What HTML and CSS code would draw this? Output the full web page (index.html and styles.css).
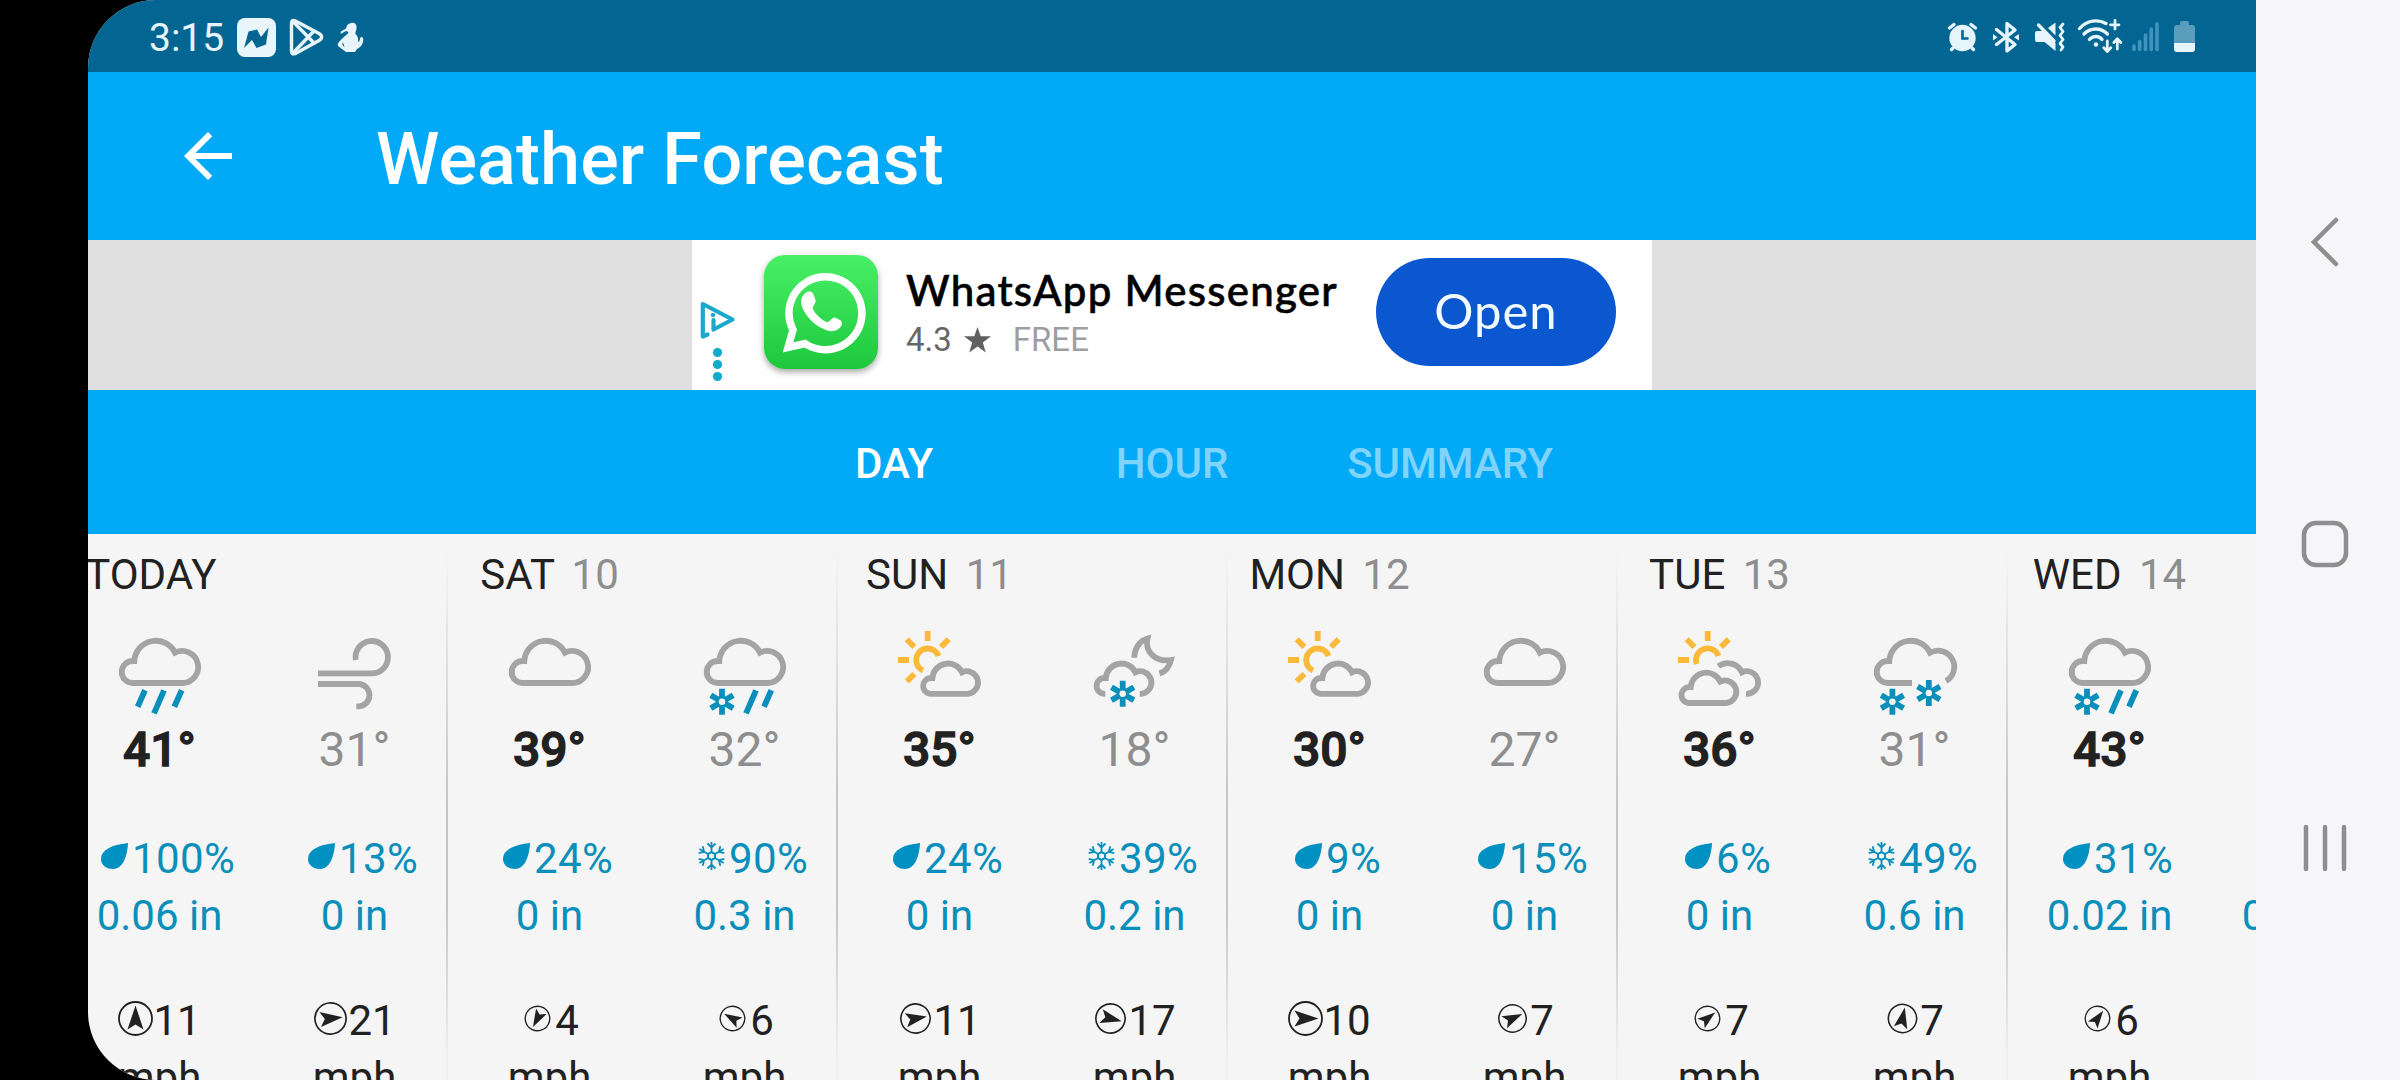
FILE: index.html
```html
<!doctype html>
<html lang="en">
<head>
	<meta charset="UTF-8" />
	<title>Weather Forecast</title>
	<link rel="stylesheet" href="styles.css">
</head>
<body>
	<!-- weather icons -->
	<svg class="defs">
		<symbol id="flake" viewBox="-14 -14 28 28">
			<path class="blue" d="M0 -13V-3.6M0 13V3.6M-11.2 -6.5L-3.1 -1.8M11.2 6.5L3.1 1.8M-11.2 6.5L-3.1 1.8M11.2 -6.5L3.1 -1.8"/>
			<circle class="ring" r="4.6"/>
		</symbol>
		<symbol id="cloud" viewBox="0 0 96 96">
			<path class="gray" d="M22.3 37A21.5 21.5 0 0 1 63 28.7A16 16 0 1 1 71 59H20.7A11 11 0 0 1 20.7 37Z"/>
		</symbol>
		<symbol id="small-cloud" viewBox="0 0 96 96">
			<path class="gray" d="M40.4 54A15.6 15.6 0 0 1 70 48.3A11.3 11.3 0 1 1 75.9 69.8H39.1A7.9 7.9 0 0 1 39.1 54Z"/>
		</symbol>
		<symbol id="rain" viewBox="0 0 96 96">
			<use href="#cloud" width="96" height="96"/>
			<path class="blue" d="M33 66.3L25.7 82.7M52 66.3L42 89.3M69.7 66.3L62.3 82.7"/>
		</symbol>
		<symbol id="sleet" viewBox="0 0 96 96">
			<use href="#cloud" width="96" height="96"/>
			<use href="#flake" x="11" y="63.7" width="28" height="28"/>
			<path class="blue" d="M59 66.3L49 89.3M74.3 66.3L67 82.7"/>
		</symbol>
		<symbol id="wind" viewBox="0 0 96 96">
			<path class="gray" d="M11 49.4H65A16.2 16.2 0 1 0 48.8 36M11 60H52.3A11.2 11.2 0 0 1 52.3 82.3H49.3"/>
		</symbol>
		<symbol id="sun-cloud" viewBox="0 0 96 96">
			<path class="sun" d="M46.5 32A11.5 11.5 0 1 0 31 46.5M35.7 7V17M56.7 15.3L49 23M14.7 15.3L22.4 23M6 36H17M14.7 57.3L22.4 50"/>
			<use href="#small-cloud" width="96" height="96"/>
		</symbol>
		<symbol id="sun-clouds" viewBox="0 0 96 96">
			<path class="sun" d="M46.5 32A11.5 11.5 0 0 0 24.7 40M35.7 7V17M56.7 15.3L49 23M14.7 15.3L22.4 23M6 36H17"/>
			<path class="gray" d="M46.3 42.3A15.6 15.6 0 0 1 70 48.3A11.3 11.3 0 1 1 74 69.8"/>
			<use href="#small-cloud" x="-21.7" y="9.2" width="96" height="96"/>
		</symbol>
		<symbol id="night-snow" viewBox="0 0 96 96">
			<path class="gray" d="M18.3 69.8H17.5A7.9 7.9 0 0 1 17.5 54H18.8A15.6 15.6 0 0 1 48.4 48.3A11.3 11.3 0 1 1 54.3 69.8H52.7"/>
			<path class="gray" d="M47.3 33.7C47.5 24 53 16.5 60.5 14.5C57.5 27 68 38.5 84 36C82 44 78 48 72.5 49.6"/>
			<use href="#flake" x="21.7" y="55.7" width="28" height="28"/>
		</symbol>
		<symbol id="snow" viewBox="0 0 96 96">
			<path class="gray" d="M45 59H20.7A11 11 0 0 1 20.7 37H22.3A21.5 21.5 0 0 1 63 28.7A16 16 0 0 1 79 57"/>
			<use href="#flake" x="11.4" y="63.7" width="28" height="28"/>
			<use href="#flake" x="47.8" y="55" width="28" height="28"/>
		</symbol>
		<symbol id="drop" viewBox="0 0 43 28">
			<path fill="#0090c2" d="M40 1C39.6 11 36 27 25 27C17.500 27 13 22.500 13 17C13 8 23 3 40 1Z"/>
		</symbol>
		<symbol id="crystal" viewBox="0 0 43 28">
			<g class="crystal" transform="translate(26.500 14)">
				<path id="arm" d="M0 -4V-14M-4 -12.500L0 -8.500L4 -12.500M-3.500 -2L0 -4L3.500 -2"/>
				<use href="#arm" transform="rotate(60)"/>
				<use href="#arm" transform="rotate(120)"/>
				<use href="#arm" transform="rotate(180)"/>
				<use href="#arm" transform="rotate(240)"/>
				<use href="#arm" transform="rotate(300)"/>
			</g>
		</symbol>
	</svg>

	<main class="app">
		<div class="status">
			<span class="time">3:15</span>
			<svg class="notify" width="39" height="39" viewBox="0 0 39 39">
				<rect width="39" height="39" rx="8" fill="#e8f5fb"/>
				<path fill="#036692" d="M7 30L11.500 13.500L20 11.500L24 19L31.500 9.500L29 26.500L19.500 30L15 22Z"/>
			</svg>
			<svg class="notify" width="35" height="39" viewBox="0 0 35 39">
				<g class="line">
					<path d="M2.500 5C2.500 2.500 4.500 1.800 6.500 3L30 15.500C33.500 17.500 33.500 20.500 30 22.500L6.500 35.500C4.500 36.500 2.500 35.500 2.500 33.500Z"/>
					<path d="M3.500 3L25 25M3.500 35.500L25 13"/>
				</g>
			</svg>
			<svg class="notify" width="27" height="31" viewBox="0 0 27 31">
				<path fill="#e8f5fb" d="M14 1C18 0 20 3 19.500 6C19.500 9 18 10 18.500 12C22 15 21 19 21.500 20C23.500 19 22.500 16 24 15L26 15.500C27 20 25 25 20 27L18 30H9L7 28.500L1 24C-0.500 21 5 17 8 14C9.500 12.500 11.500 11.500 11.500 10L9 9L3.500 12L4 9.500L9 6.500C9.500 3.500 11 1.500 14 1ZM6 20.500C4.500 22 5.500 24 7.500 25Z"/>
			</svg>
			<div class="system">
				<svg width="34" height="40" viewBox="46 16 34 40">
					<circle cx="62.500" cy="38" r="13.200" fill="#e6f4fc"/>
					<path class="line" d="M49.500 28L54 24.500M75.500 28L71 24.500M53 48L51.500 49.500M72 48L73.500 49.500"/>
					<path fill="none" stroke="#036692" stroke-width="2.600" stroke-linecap="round" d="M62.500 31V38.500H67.500"/>
				</svg>
				<svg width="36" height="40" viewBox="88 16 36 40">
					<path class="line" d="M96.500 29.500L115 44.500L107 51V23.500L115 30L96.500 44.500"/>
					<path fill="#e6f4fc" d="M93 34L97.500 37.200L93 40.500ZM119 34L114 37.200L119 40.500Z"/>
				</svg>
				<svg width="36" height="40" viewBox="132 16 36 40">
					<path fill="#e6f4fc" d="M137 31H143L155.500 43V51L144.500 42H137Q135 42 135 40V33Q135 31 137 31ZM148 28L155.500 22.500V35.500Z"/>
					<path class="line" d="M138.500 25L154 41"/>
					<path class="line thin" d="M163 24L160 27.500L163 31.500L160 35.500L163 39.500L160 43.500L163 47L161 50"/>
				</svg>
				<svg width="47" height="40" viewBox="176 16 47 40">
					<path class="line" d="M179.500 28.500C187 20 198 19 206 23.500M184 34C190 27.500 201 27 207.500 34M189.500 39.500C193 35.500 199 35.500 202 39.500"/>
					<circle cx="196" cy="44.500" r="2.200" fill="#e6f4fc"/>
					<path class="line thin" d="M215 20.500V29M210.500 24.800H219M207.300 41V51M203.800 47.800L207.300 51.500L210.800 47.800M217.300 49V39M213.800 42.500L217.300 38.800L220.800 42.500"/>
				</svg>
				<svg width="31" height="40" viewBox="231 16 31 40">
					<path stroke="#4093bc" stroke-width="3.600" stroke-linecap="round" d="M234 46V49.500M239.700 41.500V49.500M245.500 35V49.500M251.200 29V49.500M257 24V49.500"/>
				</svg>
				<svg width="28" height="40" viewBox="270 16 28 40">
					<path fill="#5b9dbd" d="M274 43V28Q274 25 277 25H280V23Q280 21 282 21H287Q289 21 289 23V25H292Q295 25 295 28V43Z"/>
					<path fill="#e6f4fc" d="M274 43H295V49Q295 52 292 52H277Q274 52 274 49Z"/>
				</svg>
			</div>
		</div>

		<header class="title">
			<svg width="72" height="72" viewBox="0 0 24 24"><path fill="#fff" d="M20 11H7.830l5.590-5.590L12 4l-8 8 8 8 1.410-1.410L7.830 13H20v-2z"/></svg>
			<h1>Weather Forecast</h1>
		</header>

		<section class="banner">
			<div class="ad">
				<svg class="choices" width="36" height="82" viewBox="0 0 36 82">
					<path fill="none" stroke="#1aa8cb" stroke-width="4.200" stroke-linejoin="round" stroke-linecap="round" d="M7.500 33.500L2.800 35.500V3L32.500 18.500L13.500 28.500V19"/>
					<circle cx="13" cy="14" r="2.200" fill="#1aa8cb"/>
					<g fill="#0fabca">
						<circle cx="17.500" cy="51.500" r="4.600"/>
						<circle cx="17.500" cy="63.500" r="4.600"/>
						<circle cx="17.500" cy="75.500" r="4.600"/>
					</g>
				</svg>
				<svg class="logo" width="114" height="114" viewBox="0 0 114 114">
					<path fill="none" stroke="#fff" stroke-width="7.500" stroke-linejoin="miter" d="M24 92.500L29 75A36.500 36.500 0 1 1 41 88.500Z"/>
					<path fill="#fff" d="M42 37.500C45 35.500 48.500 36.500 49.500 39.500L51.500 45C52.500 49 47.500 51 49 54C52 60 57 64.500 62.500 67C65.500 68 67.500 62 71 62.500L76 65C79.500 67 78 71 75 73.500C70 77.500 64 76.500 58.500 73.500C49.500 69 42.500 62 38.500 53C36 47 37 41 42 37.500Z"/>
				</svg>
				<div class="info">
					<p class="name">WhatsApp Messenger</p>
					<p class="meta">
						<span>4.3</span>
						<svg width="27" height="26" viewBox="0 0 27 26"><path fill="#5f6062" d="M13.500 0L16.700 9.300H27L18.800 15.400L21.800 25.500L13.500 19.500L5.200 25.500L8.200 15.400L0 9.300H10.300Z"/></svg>
						<span class="free">FREE</span>
					</p>
				</div>
				<a href="javascript:;" class="open">Open</a>
			</div>
		</section>

		<nav class="tabs">
			<a href="javascript:;" class="active">DAY</a>
			<a href="javascript:;">HOUR</a>
			<a href="javascript:;">SUMMARY</a>
		</nav>

		<section id="days" class="days"></section>
	</main>

	<aside class="keys">
		<svg width="50" height="50" viewBox="0 0 50 50"><path d="M36 3L14 25L36 47"/></svg>
		<svg width="50" height="50" viewBox="0 0 50 50"><rect x="4" y="3" width="42" height="42" rx="12"/></svg>
		<svg width="50" height="50" viewBox="0 0 50 50"><path d="M6 4V46M25 4V46M44 4V46"/></svg>
	</aside>

	<script>
		// each half: icon, temp, chance icon, chance, amount, wind, arrow size, arrow angle
		let data = [
			{day: 'TODAY', num: '', list: [
				['rain', 41, 'drop', 100, '0.06', 11, 35, 0],
				['wind', 31, 'drop', 13, '0', 21, 33, 84]
			]},
			{day: 'SAT', num: '10', list: [
				['cloud', 39, 'drop', 24, '0', 4, 26, 208],
				['sleet', 32, 'crystal', 90, '0.3', 6, 26, 300]
			]},
			{day: 'SUN', num: '11', list: [
				['sun-cloud', 35, 'drop', 24, '0', 11, 31, 80],
				['night-snow', 18, 'crystal', 39, '0.2', 17, 31, 104]
			]},
			{day: 'MON', num: '12', list: [
				['sun-cloud', 30, 'drop', 9, '0', 10, 35, 90],
				['cloud', 27, 'drop', 15, '0', 7, 29, 65]
			]},
			{day: 'TUE', num: '13', list: [
				['sun-clouds', 36, 'drop', 6, '0', 7, 26, 52],
				['snow', 31, 'crystal', 49, '0.6', 7, 30, 12]
			]},
			{day: 'WED', num: '14', list: [
				['sleet', 43, 'drop', 31, '0.02', 6, 26, 36],
				['cloud', 31, 'drop', 9, '0.02', 6, 26, 36]
			]}
		];

		document.querySelector('#days').innerHTML = data.map(item => {
			let halves = item.list.map(([icon, temp, type, chance, amount, wind, size, angle]) => `
				<div class="half">
					<svg class="icon" width="96" height="96"><use href="#${icon}"/></svg>
					<p class="temp">${temp}°</p>
					<p class="chance"><svg width="43" height="28"><use href="#${type}"/></svg>${chance}%</p>
					<p class="amount">${amount} in</p>
					<p class="wind"><svg width="35" height="35" viewBox="-17.5 -17.5 35 35">
						<g transform="scale(${size / 35}) rotate(${angle})">
							<circle r="16.5" fill="none" stroke="#212121" stroke-width="1.8"/>
							<path fill="#212121" d="M0 -13L8 11L0 6L-8 11Z"/>
						</g>
					</svg>${wind}</p>
					<p>mph</p>
				</div>
			`).join('');

			return `
				<div class="day">
					<h2>${item.day} <span>${item.num}</span></h2>
					<div class="halves">${halves}</div>
				</div>
			`;
		}).join('');
	</script>
</body>
</html>
```
FILE: styles.css
```css
body,h1,h2,p{
	margin: 0;
	padding: 0;
	font-weight: normal;
}
body{
	display: flex;
	width: 2400px;
	height: 1080px;
	overflow: hidden;
	background: #000;
	font-family: Roboto, sans-serif;
	color: #212121;
}
a{
	color: #fff;
	text-decoration: none;
}
svg{
	display: block;
	flex: none;
}
.defs{
	position: absolute;
	width: 0;
	height: 0;
}
.app{
	display: flex;
	flex-direction: column;
	width: 2168px;
	height: 1080px;
	margin-left: 88px;
	overflow: hidden;
	background: #f5f5f5;
	border-radius: 68px 0 0 68px;
}

/* status bar */
.status{
	display: flex;
	align-items: center;
	height: 72px;
	padding: 0 58px 0 61px;
	box-sizing: border-box;
	background: #036692;
	color: #e6f4fc;
}
.time{
	width: 88px;
	padding-top: 3px;
	font-size: 39px;
}
.notify{
	margin: 3px 13px 0 0;
}
.system{
	display: flex;
	gap: 8px;
	margin-left: auto;
}
.line{
	fill: none;
	stroke: #e6f4fc;
	stroke-width: 3.4;
	stroke-linecap: round;
	stroke-linejoin: round;
}
.thin{
	stroke-width: 2.8;
}

/* title */
.title{
	display: flex;
	align-items: center;
	height: 168px;
	padding-left: 84px;
	background: #02a9f6;
	color: #fff;
}
.title h1{
	padding-top: 7px;
	margin-left: 132px;
	font-size: 72px;
	font-weight: 500;
	letter-spacing: .1px;
}

/* ad */
.banner{
	display: flex;
	justify-content: center;
	height: 150px;
	background: #e0e0e0;
}
.ad{
	display: flex;
	align-items: center;
	width: 960px;
	padding: 0 36px 0 8px;
	box-sizing: border-box;
	background: #fff;
}
.choices{
	margin: 53px 28px 0 0;
}
.logo{
	margin: 0 28px 6px 0;
	border-radius: 21px;
	background: linear-gradient(#48f065, #1dc83d);
	box-shadow: 0 3px 6px rgba(0,0,0,.35);
}
.info{
	flex: 1;
	line-height: 50px;
	white-space: nowrap;
}
.name{
	font-family: Lato, sans-serif;
	font-size: 42px;
	font-weight: 500;
	letter-spacing: 1.25px;
	color: #000;
	-webkit-text-stroke: .6px #000;
}
.meta{
	display: flex;
	align-items: center;
	font-size: 33px;
	color: #666;
}
.meta svg{
	margin: 0 22px 0 12px;
}
.free{
	color: #9c9ea1;
}
.open{
	width: 240px;
	height: 108px;
	margin-bottom: 6px;
	border-radius: 54px;
	background: #0b57d0;
	font-family: Lato, sans-serif;
	font-size: 49px;
	line-height: 105px;
	letter-spacing: 1px;
	text-align: center;
	color: #f0faff;
}

/* tabs */
.tabs{
	display: flex;
	justify-content: center;
	height: 144px;
	background: #02a9f6;
}
.tabs a{
	width: 278px;
	font-size: 42px;
	font-weight: 500;
	line-height: 147px;
	text-align: center;
	color: #80d4fb;
}
.tabs a.active{
	color: #fff;
}

/* forecast */
.days{
	display: flex;
	flex: 1;
	margin-left: -32px;
	overflow: hidden;
}
.day{
	flex: none;
	width: 390px;
	height: 546px;
	padding: 16px 0 0 6px;
	box-sizing: border-box;
	background: linear-gradient(#f5f5f5 3%, #c4c4c4 50%, #c4c4c4 68%, #f0f0f0 96%) 0 0 / 2px 100% no-repeat;
	font-size: 42px;
	white-space: nowrap;
}
.day h2{
	width: 195px;
	height: 50px;
	font-size: 42px;
	line-height: 50px;
	text-align: center;
	white-space: pre;
}
.day h2 span{
	margin-left: 7px;
	color: #8e8e8e;
}
.halves{
	display: flex;
	margin-top: 24px;
}
.half{
	display: flex;
	flex: none;
	flex-direction: column;
	align-items: center;
	width: 195px;
	line-height: 57px;
}
.temp{
	margin-top: 2px;
	font-size: 48px;
	font-weight: 500;
	line-height: 56px;
	-webkit-text-stroke: 1.3px #212121;
}
.half + .half .temp{
	font-weight: normal;
	color: #8e8e8e;
	-webkit-text-stroke: 0;
}
.chance,.wind{
	display: flex;
	align-items: center;
}
.chance{
	margin-top: 52px;
	letter-spacing: .4px;
}
.chance,.amount{
	color: #0a8fbb;
}
.wind{
	margin-top: 48px;
}
.chance svg,.wind svg{
	margin-bottom: 5px;
}
.chance svg{
	margin-left: 4px;
	margin-right: 1px;
}
.gray,.blue,.sun,.ring{
	fill: none;
	stroke: #a4a4a4;
	stroke-width: 5.8;
}
.blue{
	stroke: #0a8fbb;
}
.sun{
	stroke: #fbb939;
}
.ring{
	stroke: #0a8fbb;
	stroke-width: 2.6;
}
.crystal{
	fill: none;
	stroke: #0a8fbb;
	stroke-width: 1.8;
}

/* navigation keys */
.keys{
	display: flex;
	flex-direction: column;
	align-items: center;
	gap: 253px;
	width: 144px;
	height: 1080px;
	padding-top: 217px;
	box-sizing: border-box;
	background: #f6f6f9;
}
.keys svg{
	margin-left: -6px;
	fill: none;
	stroke: #8e8e8e;
	stroke-width: 4.5;
	stroke-linecap: round;
}
```
